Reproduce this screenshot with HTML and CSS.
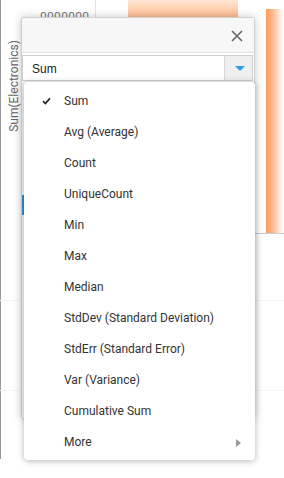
FILE: index.html
```html
<!DOCTYPE html>
<html>
<head>
<meta charset="utf-8">
<link rel="stylesheet" href="styles.css">
</head>
<body>
<div class="stage">
  <div class="chart">
    <div class="axis-left"></div>
    <div class="ylabel">Sum(Electronics)</div>
    <div class="tick">0000000</div>
    <div class="vline"></div>
    <div class="bar bar1"></div>
    <div class="bar bar2"></div>
    <div class="grid g1"></div>
    <div class="grid g2"></div>
    <div class="xaxis"></div>
  </div>

  <div class="dialog">
    <div class="dlg-head">
      <svg class="close" width="12" height="12" viewBox="0 0 12 12"><path d="M1 1 L11 11 M11 1 L1 11" stroke="#666" stroke-width="1.6" fill="none"/></svg>
    </div>
    <div class="select">
      <span class="select-text">Sum</span>
      <span class="drop"><svg width="10" height="5" viewBox="0 0 10 5"><path d="M0 0 H10 L5 5 Z" fill="#2b9fe8"/></svg></span>
    </div>
    <div class="dlg-body"><div class="accent"></div></div>
  </div>

  <ul class="menu">
    <li class="item checked"><svg class="check" width="9" height="8" viewBox="0 0 9 8"><path d="M1 4.2 L3.4 6.6 L8 1.2" stroke="#222" stroke-width="1.7" fill="none"/></svg>Sum</li>
    <li class="item">Avg (Average)</li>
    <li class="item">Count</li>
    <li class="item">UniqueCount</li>
    <li class="item">Min</li>
    <li class="item">Max</li>
    <li class="item">Median</li>
    <li class="item">StdDev (Standard Deviation)</li>
    <li class="item">StdErr (Standard Error)</li>
    <li class="item">Var (Variance)</li>
    <li class="item">Cumulative Sum</li>
    <li class="item more">More<span class="arrow"></span></li>
  </ul>
</div>
</body>
</html>
```

FILE: styles.css
```css
html, body {
  margin: 0;
  padding: 0;
  background: #fff;
}
body {
  font-family: Roboto, "Liberation Sans", sans-serif;
  font-size: 12px;
  color: #333;
}
.stage {
  position: relative;
  width: 284px;
  height: 478px;
  overflow: hidden;
  background: #fff;
}

/* chart background (free canvas) */
.chart {
  position: absolute;
  inset: 0;
}
.axis-left {
  position: absolute;
  left: 0;
  top: 0;
  width: 1px;
  height: 459px;
  background: #9a9a9a;
}
.ylabel {
  position: absolute;
  left: 14px;
  top: 86px;
  transform: translate(-50%, -50%) rotate(-90deg);
  white-space: nowrap;
  color: #666;
  font-size: 12px;
}
.tick {
  position: absolute;
  left: 40px;
  top: 10px;
  color: #777;
  font-size: 12px;
  letter-spacing: 0.3px;
}
.vline {
  position: absolute;
  left: 95px;
  top: 0;
  width: 1px;
  height: 20px;
  background: #e2e2e2;
}
.bar {
  position: absolute;
}
.bar1 {
  left: 128px;
  top: 0;
  width: 110px;
  height: 20px;
  background: linear-gradient(to bottom, #ffe6d6 0%, #ffb585 100%);
}
.bar2 {
  left: 266px;
  top: 9px;
  width: 18px;
  height: 224px;
  background: linear-gradient(to right, #ff9d5c 0%, #ffb080 30%, #ffe9dc 75%, #ffffff 100%);
}
.grid {
  position: absolute;
  left: 0;
  width: 284px;
  height: 1px;
  background: #f4f4f9;
}
.g1 { top: 300px; }
.g2 { top: 390px; }
.xaxis {
  position: absolute;
  left: 95px;
  top: 233px;
  width: 189px;
  height: 1px;
  background: #c9c9d9;
}

/* dialog */
.dialog {
  position: absolute;
  left: 21px;
  top: 17px;
  width: 232px;
  height: 400px;
  border: 1px solid #cfcfcf;
  border-radius: 3px;
  background: #fff;
  box-shadow: 0 0 10px rgba(0, 0, 0, 0.22);
  display: flex;
  flex-direction: column;
}
.dlg-head {
  height: 34px;
  background: #f7f7f7;
  border-bottom: 1px solid #e2e2e2;
  border-radius: 3px 3px 0 0;
  display: flex;
  align-items: center;
  justify-content: flex-end;
  padding-right: 11px;
}
.close {
  display: block;
  margin-top: 1px;
}
.select {
  margin: 2px 1px 0 0;
  height: 24px;
  border: 1px solid #cfcfcf;
  display: flex;
  align-items: center;
}
.select-text {
  flex: 1;
  padding-left: 9px;
  padding-top: 2px;
  font-family: "Liberation Sans", Arial, sans-serif;
  font-size: 12px;
  color: #222;
}
.drop {
  width: 27px;
  height: 100%;
  border-left: 1px solid #d6d6d6;
  background: #efefef;
  display: flex;
  align-items: center;
  justify-content: center;
}
.drop svg { display: block; margin-left: 2px; }
.dlg-body {
  flex: 1;
  position: relative;
  background: #f4f4f4;
}
.accent {
  position: absolute;
  left: 0;
  top: 114px;
  width: 2px;
  height: 20px;
  background: #2f8fd8;
}

/* dropdown menu */
.menu {
  position: absolute;
  left: 24px;
  top: 82px;
  width: 231px;
  height: 372px;
  margin: 0;
  padding: 4px 0 2px;
  list-style: none;
  background: #fff;
  border-radius: 4px;
  box-shadow: 0 1px 6px rgba(0, 0, 0, 0.3);
}
.item {
  position: relative;
  height: 31px;
  line-height: 31px;
  padding-left: 40px;
  font-size: 12px;
  color: #333;
  white-space: nowrap;
}
.check {
  position: absolute;
  left: 18px;
  top: 11px;
}
.arrow {
  position: absolute;
  right: 14px;
  top: 12px;
  width: 0;
  height: 0;
  border-top: 4px solid transparent;
  border-bottom: 4px solid transparent;
  border-left: 5px solid #999;
}
```
